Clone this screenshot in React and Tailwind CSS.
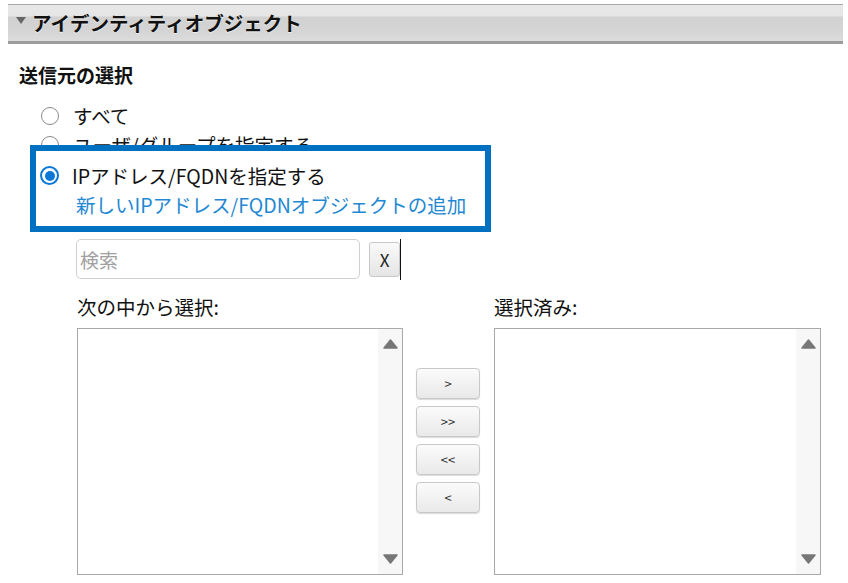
const radioText = "text-[19.5px] leading-[29px] text-[#111]";

function Radio({ checked }) {
  if (checked) {
    return (
      <span className="flex h-[19px] w-[19px] shrink-0 items-center justify-center rounded-full border-2 border-[#0a78d6] bg-white">
        <span className="h-[10px] w-[10px] rounded-full bg-[#0a78d6]" />
      </span>
    );
  }
  return <span className="h-[18px] w-[18px] shrink-0 rounded-full border-[1.5px] border-[#8a8a8a] bg-white" />;
}

function ListBox() {
  return (
    <div className="flex h-[247px] border border-[#a9a9a9] bg-white">
      <div className="flex-1" />
      <div className="flex w-[24px] flex-col items-center justify-between bg-[#f7f7f7] pt-[10px] pb-[10px]">
        <svg width="15" height="10" viewBox="0 0 15 10">
          <path d="M7.5 1 L14 9 L1 9 Z" fill="#777" stroke="#777" strokeLinejoin="round" strokeWidth="1.5" />
        </svg>
        <svg width="15" height="10" viewBox="0 0 15 10">
          <path d="M1 1 L14 1 L7.5 9 Z" fill="#777" stroke="#777" strokeLinejoin="round" strokeWidth="1.5" />
        </svg>
      </div>
    </div>
  );
}

function MoveButton({ label }) {
  return (
    <button className="h-[31px] w-[64px] rounded-[4px] border border-[#c8c8c8] bg-[linear-gradient(to_bottom,#fbfbfb,#e9e9e9)] text-[13px] text-[#333] shadow-[0_1px_1px_rgba(0,0,0,0.15)]">
      {label}
    </button>
  );
}

export default function App() {
  return (
    <div className="h-[583px] w-[848px] overflow-hidden bg-white font-['Noto_Sans_CJK_JP',sans-serif]">
      {/* ヘッダー */}
      <div className="ml-2 mt-1 flex h-[40px] w-[835px] items-center border-t border-[#a5a5a5] border-b-[3px] border-b-[#9c9c9c] bg-[linear-gradient(to_bottom,#e8e8e8_0%,#e5e5e5_30%,#d1d1d1_34%,#d4d4d4_70%,#dcdcdc_100%)] pl-2">
        <svg width="10" height="7" viewBox="0 0 10 7" className="mb-[6px]">
          <path d="M0 0 L10 0 L5 7 Z" fill="#666" />
        </svg>
        <span className="ml-[6px] text-[19.5px] font-bold leading-none text-[#111] [text-shadow:0_1px_0_rgba(255,255,255,0.6)]">
          アイデンティティオブジェクト
        </span>
      </div>

      {/* 送信元の選択 */}
      <div className="ml-[19px] mt-[18px] text-[19px] font-bold leading-[26px] text-[#111]">送信元の選択</div>

      <div className="mt-[13px]">
        <div className="ml-[41px] flex items-center gap-[14px]">
          <Radio />
          <span className={radioText}>すべて</span>
        </div>
        <div className="ml-[41px] flex items-center gap-[14px]">
          <Radio />
          <span className={radioText}>ユーザ/グループを指定する</span>
        </div>

        <div className="relative ml-[30px] mt-[-14px] h-[87px] w-[461px] border-[6px] border-[#0070c0] bg-white">
          <div className="ml-[4px] mt-[10px] flex items-center gap-[13px]">
            <Radio checked />
            <span className={radioText}>IPアドレス/FQDNを指定する</span>
          </div>
          <div className="ml-[40px] text-[19.5px] leading-[30px] text-[#1f88d2]">
            新しいIPアドレス/FQDNオブジェクトの追加
          </div>
        </div>
      </div>

      {/* 検索 */}
      <div className="ml-[76px] mt-[7px] flex items-start">
        <input
          placeholder="検索"
          className="h-[40px] w-[284px] rounded-[5px] border border-[#cfcfcf] bg-white px-[3px] text-[19px] text-[#333] placeholder:text-[#a0a0a0] outline-none"
        />
        <button className="ml-[9px] mt-[3px] h-[35px] w-[31px] rounded-[3px] border border-[#c8c8c8] bg-[linear-gradient(to_bottom,#fafafa,#e5e5e5)] text-[17px] text-[#222]">
          X
        </button>
        <div className="h-[41px] w-px bg-[#111]" />
      </div>

      {/* リスト */}
      <div className="ml-[77px] mt-[14px] flex">
        <div className="w-[326px]">
          <div className="text-[19.5px] leading-[26px] text-[#111]">次の中から選択:</div>
          <div className="mt-[8px]">
            <ListBox />
          </div>
        </div>
        <div className="ml-[13px] mt-[74px] flex flex-col gap-[7px]">
          <MoveButton label=">" />
          <MoveButton label=">>" />
          <MoveButton label="<<" />
          <MoveButton label="<" />
        </div>
        <div className="ml-[14px] w-[327px]">
          <div className="text-[19.5px] leading-[26px] text-[#111]">選択済み:</div>
          <div className="mt-[8px]">
            <ListBox />
          </div>
        </div>
      </div>
    </div>
  );
}
